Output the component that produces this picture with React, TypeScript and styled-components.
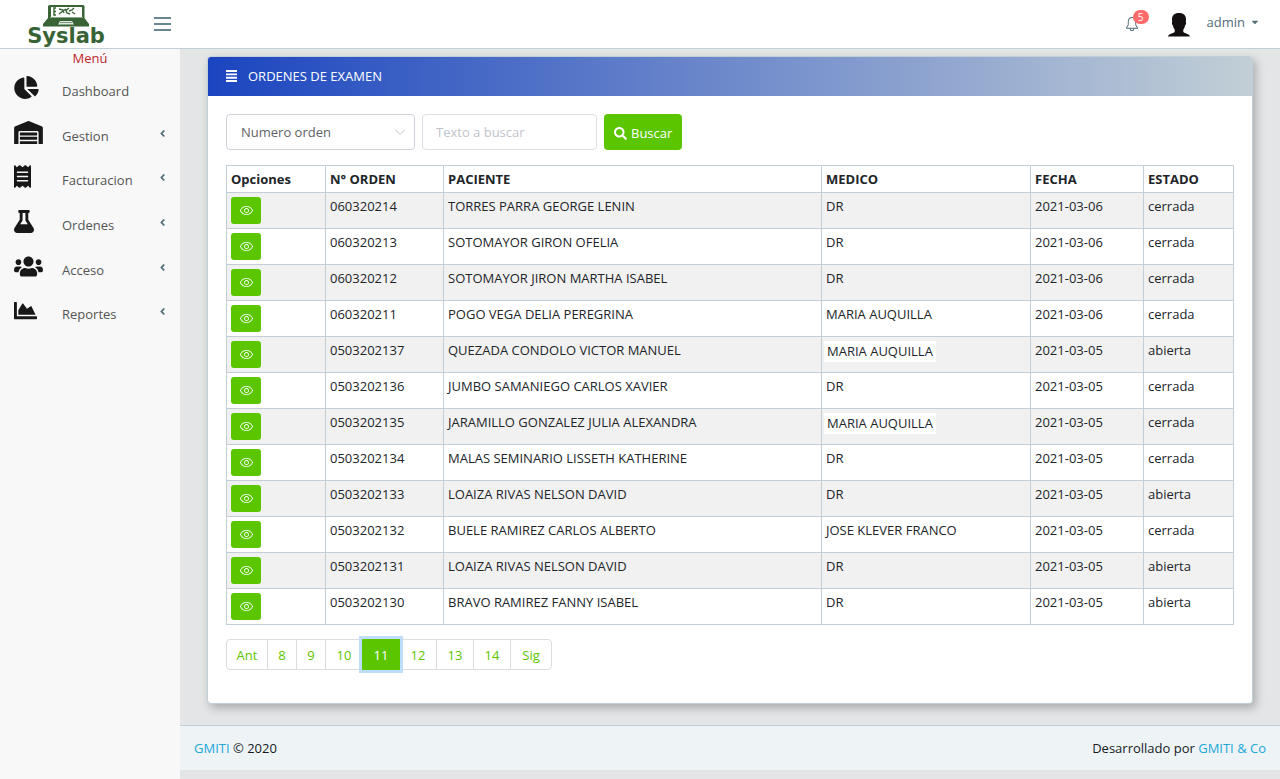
import React from "react";
import styled, { createGlobalStyle } from "styled-components";
import {
  FaChartPie,
  FaWarehouse,
  FaReceipt,
  FaFlask,
  FaUsers,
  FaChartArea,
  FaAngleLeft,
  FaSearch,
  FaCaretDown,
} from "react-icons/fa";
import { SlEye, SlBell } from "react-icons/sl";

const GlobalStyle = createGlobalStyle`
  *, *::before, *::after { box-sizing: border-box; }
  body {
    margin: 0;
    background: #e4e5e6;
    color: #212529;
    font: 13px/20px "Open Sans", "Noto Sans", sans-serif;
  }
  button, input, select { font: inherit; }
  a { color: #20a8d8; text-decoration: none; }
`;

const Page = styled.div`
  display: flex;
  flex-direction: column;
  min-height: 100vh;
`;

const TopBar = styled.header`
  display: flex;
  align-items: center;
  height: 49px;
  padding-right: 20px;
  background: #fff;
  border-bottom: 1px solid #c2cfd6;
`;

const Brand = styled.a`
  width: 132px;
  height: 48px;
  svg { display: block; }
`;

const Toggler = styled.button`
  display: flex;
  flex-direction: column;
  gap: 4px;
  margin: 0 auto 0 16px;
  padding: 6px;
  border: 0;
  background: none;
  cursor: pointer;
`;

const TogglerBar = styled.span`
  width: 17px;
  height: 2px;
  background: #6d8694;
`;

const BellButton = styled.button`
  position: relative;
  display: flex;
  padding: 0;
  margin-right: 28px;
  border: 0;
  background: none;
  color: #536c79;
  font-size: 14px;
`;

const CountBadge = styled.span`
  position: absolute;
  left: 8px;
  bottom: 7px;
  width: 16px;
  height: 14px;
  border-radius: 7px;
  background: #ff6b6b;
  color: #fff;
  font-size: 10px;
  line-height: 14px;
  text-align: center;
`;

const UserButton = styled.button`
  display: flex;
  align-items: center;
  gap: 5px;
  padding: 0 0 4px;
  border: 0;
  background: none;
  color: #536c79;
  svg:last-child { font-size: 10px; }
`;

const Avatar = styled.svg`
  margin: 6px 11px 0 0;
`;

const Body = styled.div`
  display: flex;
  flex: 1;
`;

const Sidebar = styled.nav`
  flex: 0 0 180px;
  background: #f8f8f8;
`;

const MenuTitle = styled.h2`
  margin: 0 0 2px;
  color: #c1242b;
  font-size: 13px;
  font-weight: 400;
  line-height: 18px;
  text-align: center;
`;

const MenuList = styled.ul`
  display: grid;
  grid-auto-rows: 1fr;
  min-height: 268px;
  margin: 0;
  padding: 0;
  list-style: none;
`;

const MenuLink = styled.a`
  display: grid;
  grid-template-columns: 48px 1fr auto;
  align-items: start;
  padding: 7px 12px 0 14px;
  color: #555;
`;

const MenuIcon = styled.span<{ $width: number }>`
  color: #181818;
  svg {
    display: block;
    width: ${(p) => p.$width}px;
    height: 23px;
  }
`;

const MenuText = styled.span`
  padding-top: 5px;
`;

const MenuArrow = styled.span`
  padding-top: 7px;
  color: #536c79;
  svg { display: block; font-size: 11px; }
`;

const Main = styled.div`
  display: flex;
  flex: 1;
  flex-direction: column;
  min-width: 0;
  padding-bottom: 9px;
`;

const Card = styled.section`
  margin: 7px 27px 21px;
  border: 1px solid #c2cfd6;
  border-radius: 4px;
  background: #fff;
  box-shadow: 3px 4px 10px rgba(0, 0, 0, 0.25);
`;

const CardHeader = styled.h1`
  display: flex;
  align-items: center;
  gap: 11px;
  margin: 0;
  padding: 9px 18px 10px;
  border-radius: 3px 3px 0 0;
  background: linear-gradient(to right, #1b45c0, #c2cfd6);
  color: #fff;
  font-size: 13px;
  font-weight: 400;
  line-height: 20px;
`;

const CardBody = styled.div`
  padding: 18px 18px 33px;
`;

const SearchForm = styled.form`
  display: flex;
  gap: 7px;
  margin-bottom: 15px;
`;

const SelectWrap = styled.div`
  position: relative;
  width: 189px;
`;

const Field = styled.select`
  width: 100%;
  height: 36px;
  padding: 0 14px;
  border: 1px solid #cdd0d8;
  border-radius: 4px;
  background: #fff;
  color: #606266;
  appearance: none;
`;

const Chevron = styled.svg`
  position: absolute;
  right: 10px;
  top: 15px;
  pointer-events: none;
`;

const SearchInput = styled.input`
  width: 175px;
  height: 36px;
  padding: 0 13px;
  border: 1px solid #dcdfe6;
  border-radius: 4px;
  background: #fff;
  &::placeholder { color: #c0c4cc; opacity: 1; }
`;

const SearchButton = styled.button`
  display: flex;
  align-items: center;
  justify-content: center;
  gap: 4px;
  height: 36px;
  padding: 2px 10px 0;
  border: 0;
  border-radius: 4px;
  background: #5bc500;
  color: #fff;
`;

const Table = styled.table`
  width: 100%;
  table-layout: fixed;
  border-collapse: collapse;
  line-height: 18px;
  th, td {
    padding: 4px;
    border: 1px solid #c2cfd6;
    text-align: left;
    vertical-align: top;
  }
  tbody tr:nth-child(odd) { background: #f1f1f1; }
`;

const Column = styled.col<{ $width?: number }>`
  width: ${(p) => (p.$width ? `${p.$width}px` : "auto")};
`;

const ViewButton = styled.button`
  display: flex;
  align-items: center;
  justify-content: center;
  width: 30px;
  height: 27px;
  padding: 0;
  border: 0;
  border-radius: 3px;
  background: #5bc500;
  color: #fff;
  font-size: 13px;
`;

const Mark = styled.span`
  display: inline-block;
  margin-left: -2px;
  padding: 1px 3px 2px;
  background: #fff;
`;

const Pages = styled.ul`
  display: flex;
  margin: 14px 0 0;
  padding: 0;
  list-style: none;
`;

const PageItem = styled.li`
  & + & { margin-left: -1px; }
  &:first-child button { border-radius: 4px 0 0 4px; }
  &:last-child button { border-radius: 0 4px 4px 0; }
`;

const PageButton = styled.button<{ $active: boolean; $width: number }>`
  position: relative;
  min-width: ${(p) => p.$width}px;
  height: 31px;
  padding: 0 4px;
  border: 1px solid ${(p) => (p.$active ? "#5bc500" : "#ddd")};
  background: ${(p) => (p.$active ? "#5bc500" : "#fff")};
  color: ${(p) => (p.$active ? "#fff" : "#5bc500")};
  z-index: ${(p) => (p.$active ? 1 : 0)};
  box-shadow: ${(p) => (p.$active ? "0 0 0 3px #bfdeff" : "none")};
`;

const Footer = styled.footer`
  display: flex;
  justify-content: space-between;
  margin-top: auto;
  padding: 12px 14px;
  border-top: 1px solid #c2cfd6;
  background: #eef3f6;
  color: #151b1e;
`;

const menu = [
  { text: "Dashboard", Icon: FaChartPie, width: 25, sub: false },
  { text: "Gestion", Icon: FaWarehouse, width: 29, sub: true },
  { text: "Facturacion", Icon: FaReceipt, width: 17, sub: true },
  { text: "Ordenes", Icon: FaFlask, width: 20, sub: true },
  { text: "Acceso", Icon: FaUsers, width: 29, sub: true },
  { text: "Reportes", Icon: FaChartArea, width: 23, sub: true },
];

type Order = {
  id: string;
  patient: string;
  doctor: string;
  date: string;
  status: string;
  marked?: boolean;
};

const orders: Order[] = [
  { id: "060320214", patient: "TORRES PARRA GEORGE LENIN", doctor: "DR", date: "2021-03-06", status: "cerrada" },
  { id: "060320213", patient: "SOTOMAYOR GIRON OFELIA", doctor: "DR", date: "2021-03-06", status: "cerrada" },
  { id: "060320212", patient: "SOTOMAYOR JIRON MARTHA ISABEL", doctor: "DR", date: "2021-03-06", status: "cerrada" },
  { id: "060320211", patient: "POGO VEGA DELIA PEREGRINA", doctor: "MARIA AUQUILLA", date: "2021-03-06", status: "cerrada" },
  { id: "0503202137", patient: "QUEZADA CONDOLO VICTOR MANUEL", doctor: "MARIA AUQUILLA", date: "2021-03-05", status: "abierta", marked: true },
  { id: "0503202136", patient: "JUMBO SAMANIEGO CARLOS XAVIER", doctor: "DR", date: "2021-03-05", status: "cerrada" },
  { id: "0503202135", patient: "JARAMILLO GONZALEZ JULIA ALEXANDRA", doctor: "MARIA AUQUILLA", date: "2021-03-05", status: "cerrada", marked: true },
  { id: "0503202134", patient: "MALAS SEMINARIO LISSETH KATHERINE", doctor: "DR", date: "2021-03-05", status: "cerrada" },
  { id: "0503202133", patient: "LOAIZA RIVAS NELSON DAVID", doctor: "DR", date: "2021-03-05", status: "abierta" },
  { id: "0503202132", patient: "BUELE RAMIREZ CARLOS ALBERTO", doctor: "JOSE KLEVER FRANCO", date: "2021-03-05", status: "cerrada" },
  { id: "0503202131", patient: "LOAIZA RIVAS NELSON DAVID", doctor: "DR", date: "2021-03-05", status: "abierta" },
  { id: "0503202130", patient: "BRAVO RAMIREZ FANNY ISABEL", doctor: "DR", date: "2021-03-05", status: "abierta" },
];

const pages = ["Ant", "8", "9", "10", "11", "12", "13", "14", "Sig"];

/* Button width by number of characters in its label. */
const pageWidths: Record<number, number> = { 1: 30, 2: 38, 3: 42 };

function Logo() {
  return (
    <svg width="132" height="48" viewBox="0 0 132 48" role="img" aria-label="Syslab">
      <path d="M50 5h33q1.500 0 1.500 1.500V18l4.500 6v2.500H43V24l5-6V6.500Q48 5 50 5z" fill="#376335" />
      <path d="M51 7h31v10H51z" fill="#fff" />
      <path
        d="M56 8h-2v7h2M54 11.500h2M59 9l4 1 1 3M59 14l4-3 3-2M69 8l-3 2.500 1 2.500 3 1M69 11l3-1 2-2M72 12l3 2"
        fill="none"
        stroke="#376335"
        strokeWidth="1.4"
      />
      <path d="M50 17.500h33" stroke="#8ba78a" />
      <path d="M60 21h12l2 3.500H58z" fill="#dfe8df" />
      <path d="M60 22.500h12" stroke="#376335" strokeWidth="0.6" />
      <text
        x="66"
        y="43"
        textAnchor="middle"
        fill="#376335"
        fontFamily="DejaVu Sans, sans-serif"
        fontWeight="700"
        fontSize="21"
      >
        Syslab
      </text>
    </svg>
  );
}

export default function App() {
  return (
    <Page>
      <GlobalStyle />
      <TopBar>
        <Brand href="#">
          <Logo />
        </Brand>
        <Toggler type="button" aria-label="Mostrar menú">
          <TogglerBar />
          <TogglerBar />
          <TogglerBar />
        </Toggler>
        <BellButton type="button" aria-label="Notificaciones">
          <SlBell />
          <CountBadge>5</CountBadge>
        </BellButton>
        <UserButton type="button">
          <Avatar width="24" height="26" viewBox="0 0 24 26" aria-hidden="true">
            <path
              d="M12 1C16.800 1 19 3.500 19 7.500c0 1-.1 1.800-.2 2.500.7.800.2 3-.8 3.500-.3 2-.9 3.200-1.700 4v2.500c1.500 1.500 6 1.600 6.700 4.500H1c.7-2.900 5.200-3 6.700-4.500v-2.500c-.8-.8-1.400-2-1.700-4-1-.5-1.500-2.700-.8-3.500C5.100 9.300 5 8.500 5 7.500 5 3.500 7.200 1 12 1z"
              fill="#130e0f"
            />
          </Avatar>
          admin
          <FaCaretDown />
        </UserButton>
      </TopBar>
      <Body>
        <Sidebar>
          <MenuTitle>Menú</MenuTitle>
          <MenuList>
            {menu.map(({ text, Icon, width, sub }) => (
              <li key={text}>
                <MenuLink href="#">
                  <MenuIcon $width={width}>
                    <Icon />
                  </MenuIcon>
                  <MenuText>{text}</MenuText>
                  {sub && (
                    <MenuArrow>
                      <FaAngleLeft />
                    </MenuArrow>
                  )}
                </MenuLink>
              </li>
            ))}
          </MenuList>
        </Sidebar>
        <Main>
          <Card>
            <CardHeader>
              <svg width="11" height="12" viewBox="0 0 11 12" aria-hidden="true">
                <path d="M0 0h11v1.900H0zM0 3.400h11v1.900H0zM0 6.800h11v1.900H0zM0 10.100h11V12H0z" fill="#fff" />
              </svg>
              ORDENES DE EXAMEN
            </CardHeader>
            <CardBody>
              <SearchForm onSubmit={(e) => e.preventDefault()}>
                <SelectWrap>
                  <Field aria-label="Criterio de búsqueda">
                    <option>Numero orden</option>
                  </Field>
                  <Chevron width="10" height="7" viewBox="0 0 10 7" aria-hidden="true">
                    <path d="M.5 1 5 5.500 9.500 1" fill="none" stroke="#c0c4cc" />
                  </Chevron>
                </SelectWrap>
                <SearchInput type="text" placeholder="Texto a buscar" aria-label="Texto a buscar" />
                <SearchButton type="submit">
                  <FaSearch />
                  Buscar
                </SearchButton>
              </SearchForm>
              <Table>
                <colgroup>
                  <Column $width={99} />
                  <Column $width={118} />
                  <Column />
                  <Column $width={209} />
                  <Column $width={113} />
                  <Column $width={90} />
                </colgroup>
                <thead>
                  <tr>
                    <th>Opciones</th>
                    <th>N° ORDEN</th>
                    <th>PACIENTE</th>
                    <th>MEDICO</th>
                    <th>FECHA</th>
                    <th>ESTADO</th>
                  </tr>
                </thead>
                <tbody>
                  {orders.map((o) => (
                    <tr key={o.id}>
                      <td>
                        <ViewButton type="button" aria-label={`Ver orden ${o.id}`}>
                          <SlEye />
                        </ViewButton>
                      </td>
                      <td>{o.id}</td>
                      <td>{o.patient}</td>
                      <td>{o.marked ? <Mark>{o.doctor}</Mark> : o.doctor}</td>
                      <td>{o.date}</td>
                      <td>{o.status}</td>
                    </tr>
                  ))}
                </tbody>
              </Table>
              <nav aria-label="Paginación">
                <Pages>
                  {pages.map((p) => (
                    <PageItem key={p}>
                      <PageButton type="button" $active={p === "11"} $width={pageWidths[p.length]}>
                        {p}
                      </PageButton>
                    </PageItem>
                  ))}
                </Pages>
              </nav>
            </CardBody>
          </Card>
          <Footer>
            <span>
              <a href="#">GMITI</a> © 2020
            </span>
            <span>
              Desarrollado por <a href="#">GMITI &amp; Co</a>
            </span>
          </Footer>
        </Main>
      </Body>
    </Page>
  );
}
